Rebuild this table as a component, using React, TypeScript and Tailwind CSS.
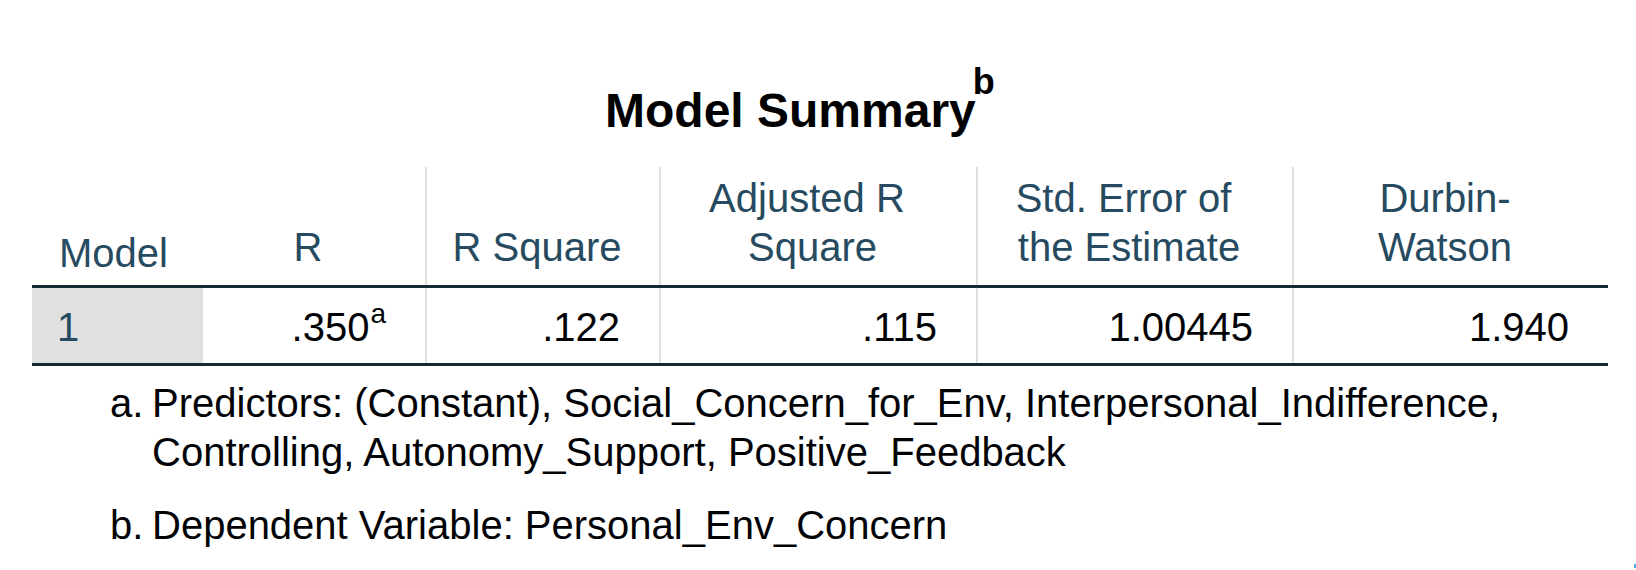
const HEADERS = [
  { lines: ["R"] },
  { lines: ["R Square"] },
  { lines: ["Adjusted R\u00a0", "Square"] },
  { lines: ["Std. Error of\u00a0", "the Estimate"] },
  { lines: ["Durbin-", "Watson"] },
];

const VALUES: { value: string; sup?: string }[] = [
  { value: ".350", sup: "a" },
  { value: ".122" },
  { value: ".115" },
  { value: "1.00445" },
  { value: "1.940" },
];

const GRID = "grid grid-cols-[171px_222px_234px_317px_316px_316px]";

export default function App() {
  return (
    <div className="relative w-[1636px] h-[570px] bg-white font-['Liberation_Sans',Arial,sans-serif] text-[#010205]">
      {/* Title */}
      <div className="pt-[83px] pl-[605px] text-[48px] leading-[56px] font-bold text-black">
        Model Summary
        <span className="relative -top-[33px] -ml-[3px] text-[36px] leading-none font-bold">b</span>
      </div>

      {/* Table */}
      <div className="mt-[28px] ml-[32px] w-[1576px] text-[40px] leading-[49px]">
        <div className={`${GRID} h-[118px] text-[#264a60]`}>
          <div className="flex flex-col justify-end items-start pl-[27px] pb-[7px]">Model</div>
          {HEADERS.map((h, i) => (
            <div
              key={i}
              className={`flex flex-col justify-end items-center pl-[8px] pr-[20px] pb-[13px] whitespace-pre ${
                i > 0 ? "border-l-2 border-[#e0e0e0]" : ""
              }`}
            >
              {h.lines.map((line) => (
                <span key={line}>{line}</span>
              ))}
            </div>
          ))}
        </div>

        <div className="border-y-[3px] border-[#152935]">
          <div className={`${GRID} h-[75px]`}>
            <div className="bg-[#e0e0e0] pl-[25px] pt-[15px] text-[#264a60]">1</div>
            {VALUES.map((v, i) => (
              <div
                key={i}
                className={`text-right pr-[39px] pt-[15px] ${i > 0 ? "border-l-2 border-[#e0e0e0]" : ""}`}
              >
                {v.value}
                {v.sup && (
                  <span className="relative -top-[18px] ml-[1px] text-[28px] leading-none">{v.sup}</span>
                )}
              </div>
            ))}
          </div>
        </div>
      </div>

      {/* Footnotes */}
      <div className="mt-[13px] pl-[110px] pr-[60px] text-[40px] leading-[49px]">
        <div className="flex">
          <span className="w-[42px] shrink-0">a.</span>
          <span>
            Predictors: (Constant), Social_Concern_for_Env, Interpersonal_Indifference,
            <br />
            Controlling, Autonomy_Support, Positive_Feedback
          </span>
        </div>
        <div className="flex mt-[24px]">
          <span className="w-[42px] shrink-0">b.</span>
          <span>Dependent Variable: Personal_Env_Concern</span>
        </div>
      </div>

      <span className="absolute right-0 bottom-[2px] w-[2px] h-[4px] bg-[#5aa9e6]" />
    </div>
  );
}
